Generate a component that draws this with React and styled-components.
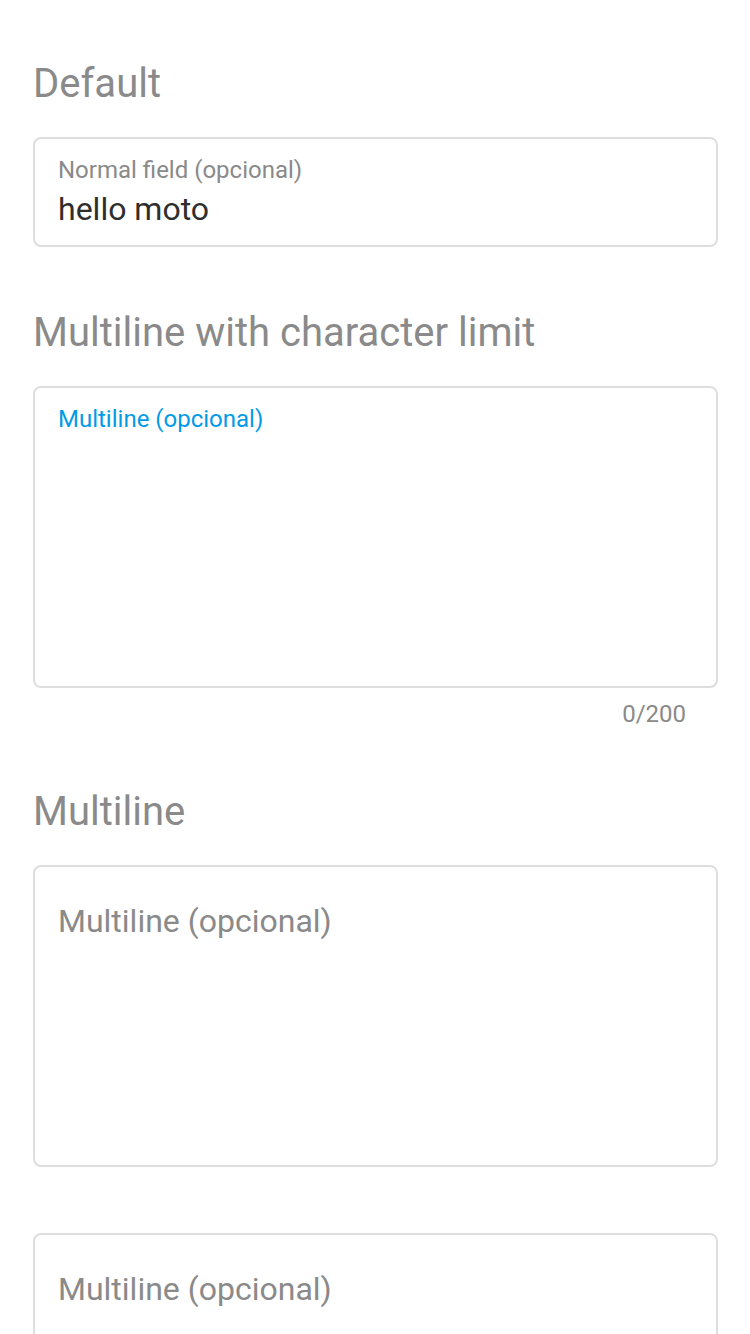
import React from "react";
import styled, { createGlobalStyle } from "styled-components";

const GlobalStyle = createGlobalStyle`
  html, body {
    margin: 0;
    padding: 0;
    background: #ffffff;
  }
  body {
    font-family: Roboto, "Liberation Sans", Arial, sans-serif;
  }
  * {
    box-sizing: border-box;
  }
`;

const Page = styled.div`
  display: flex;
  flex-direction: column;
  padding: 60px 32px 0 33px;
  width: 750px;
  height: 1334px;
  overflow: hidden;
`;

const Section = styled.section`
  display: flex;
  flex-direction: column;
  margin-top: ${({ space }) => space || 0}px;
`;

const Heading = styled.h2`
  margin: 0 0 29px;
  font-size: 40px;
  line-height: 48px;
  font-weight: 400;
  color: #8a8a8a;
`;

const Field = styled.label`
  display: flex;
  flex-direction: column;
  border: 2px solid #dedede;
  border-radius: 8px;
  padding: ${({ resting }) => (resting ? "34px 23px 16px" : "17px 23px 16px")};
  min-height: ${({ tall }) => (tall ? "302px" : "110px")};
  background: #fff;
`;

const Label = styled.span`
  font-size: ${({ resting }) => (resting ? "32px" : "24px")};
  line-height: ${({ resting }) => (resting ? "40px" : "28px")};
  color: ${({ focused }) => (focused ? "#039be5" : "#8a8a8a")};
`;

const Input = styled.input`
  margin-top: 5px;
  padding: 0;
  border: none;
  outline: none;
  background: transparent;
  font-family: inherit;
  font-size: 32px;
  line-height: 40px;
  height: 40px;
  color: #2e2e2e;
`;

const Area = styled.textarea`
  flex: 1;
  margin-top: 5px;
  padding: 0;
  border: none;
  outline: none;
  resize: none;
  background: transparent;
  font-family: inherit;
  font-size: 32px;
  line-height: 40px;
  color: #2e2e2e;
`;

const Counter = styled.div`
  align-self: flex-end;
  margin: 12px 32px 0 0;
  font-size: 24px;
  line-height: 28px;
  color: #8a8a8a;
`;

export default function App() {
  return (
    <>
      <GlobalStyle />
      <Page>
        <Section>
          <Heading>Default</Heading>
          <Field>
            <Label>Normal field (opcional)</Label>
            <Input defaultValue="hello moto" readOnly />
          </Field>
        </Section>

        <Section space={62}>
          <Heading>Multiline with character limit</Heading>
          <Field tall>
            <Label focused>Multiline (opcional)</Label>
            <Area maxLength={200} />
          </Field>
          <Counter>0/200</Counter>
        </Section>

        <Section space={60}>
          <Heading>Multiline</Heading>
          <Field tall resting>
            <Label resting>Multiline (opcional)</Label>
          </Field>
        </Section>

        <Section space={66}>
          <Field tall resting>
            <Label resting>Multiline (opcional)</Label>
          </Field>
        </Section>
      </Page>
    </>
  );
}
